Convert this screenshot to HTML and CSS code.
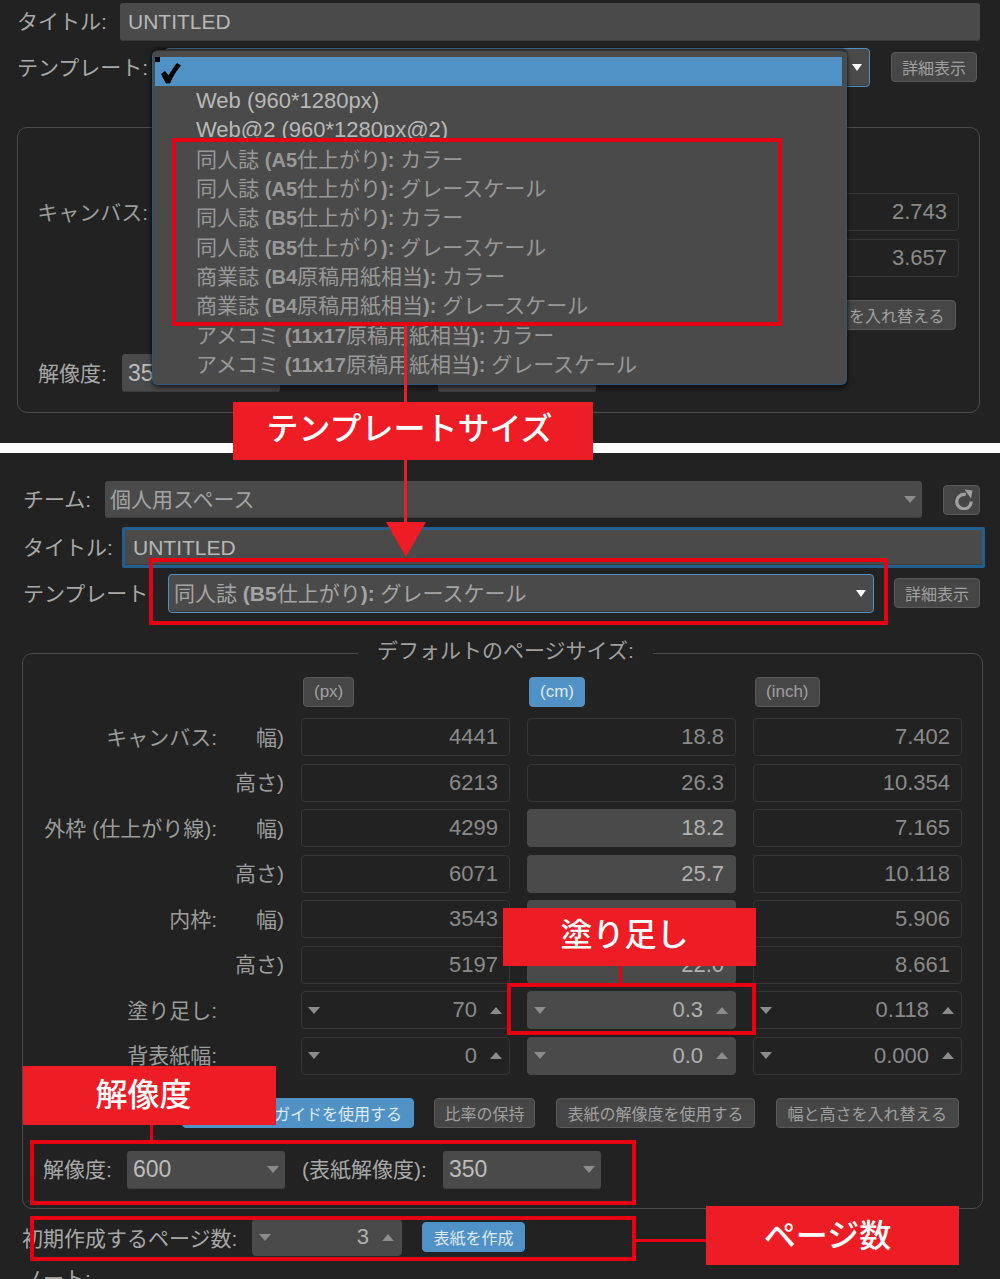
FILE: index.html
```html
<!DOCTYPE html>
<html lang="ja">
<head>
  <meta charset="UTF-8" />
  <title>テンプレートサイズ</title>
  <link rel="stylesheet" href="styles.css">
</head>
<body>
<div class="page">

  <!-- Top capture: template menu open -->
  <section class="panel panel-top">
    <div class="form-row title-row">
      <span class="row-label top-label">タイトル:</span>
      <div class="text-field">UNTITLED</div>
    </div>
    <div class="form-row template-row">
      <span class="row-label top-label">テンプレート:</span>
      <div class="select select-focus"><span></span><i class="arrow-down arrow-white"></i></div>
      <button class="btn">詳細表示</button>
    </div>

    <fieldset class="size-box size-box-top">
      <legend>&nbsp;</legend>
      <div class="size-grid size-grid-top">
        <span class="unit-spacer"></span><span></span>
        <span></span><span></span><span></span>

        <span class="group-label">キャンバス:</span><span></span>
        <div class="field"></div><div class="field"></div><div class="field">2.743</div>
        <span></span><span></span>
        <div class="field"></div><div class="field"></div><div class="field">3.657</div>
      </div>
      <div class="action-row action-row-top">
        <button class="btn">幅と高さを入れ替える</button>
      </div>
      <div class="res-row res-row-top">
        <span class="res-label">解像度:</span>
        <div class="select res-select"><span class="select-value">350</span><i class="arrow-down"></i></div>
        <span class="res-label-2"></span>
        <div class="select res-select"><i class="arrow-down"></i></div>
      </div>
    </fieldset>

    <div class="menu">
      <div class="menu-item menu-selected">
        <i class="menu-corner"></i>
        <svg class="menu-check" viewBox="0 0 20 21" width="20" height="21"><path d="M0 11 L4 8 L7.5 12.5 C10 8 13 3.5 16 0 L20 2.5 C15.5 7.5 11.5 14 9 20.5 L5 20.5 Z" fill="#000"/></svg>
      </div>
      <div class="menu-item menu-bright">Web (960*1280px)</div>
      <div class="menu-item menu-bright">Web@2 (960*1280px@2)</div>
      <div class="menu-item">同人誌 <b>(A5</b>仕上がり<b>):</b> カラー</div>
      <div class="menu-item">同人誌 <b>(A5</b>仕上がり<b>):</b> グレースケール</div>
      <div class="menu-item">同人誌 <b>(B5</b>仕上がり<b>):</b> カラー</div>
      <div class="menu-item">同人誌 <b>(B5</b>仕上がり<b>):</b> グレースケール</div>
      <div class="menu-item">商業誌 <b>(B4</b>原稿用紙相当<b>):</b> カラー</div>
      <div class="menu-item">商業誌 <b>(B4</b>原稿用紙相当<b>):</b> グレースケール</div>
      <div class="menu-item">アメコミ <b>(11x17</b>原稿用紙相当<b>):</b> カラー</div>
      <div class="menu-item">アメコミ <b>(11x17</b>原稿用紙相当<b>):</b> グレースケール</div>
    </div>
  </section>

  <div class="divider"></div>

  <!-- Bottom capture: B5 greyscale selected -->
  <section class="panel panel-bottom">
    <div class="form-row team-row">
      <span class="row-label team-label">チーム:</span>
      <div class="select"><span class="select-text">個人用スペース</span><i class="arrow-down"></i></div>
      <button class="btn icon-btn" aria-label="更新">
        <svg class="refresh-icon" viewBox="0 0 18 21" width="18" height="21"><path d="M10.8 5.6 A7.2 7.2 0 1 0 16.2 12.5" fill="none" stroke="#a0a0a0" stroke-width="3.2"/><path d="M9.5 0.5 L17.5 1.5 L16 9.5 Z" fill="#a0a0a0"/></svg>
      </button>
    </div>
    <div class="form-row title-row-2">
      <span class="row-label title-label">タイトル:</span>
      <div class="text-field text-field-focus">UNTITLED</div>
    </div>
    <div class="form-row template-row-2">
      <span class="row-label template-label">テンプレート</span>
      <div class="select select-focus"><span class="select-text">同人誌 <b>(B5</b>仕上がり<b>):</b> グレースケール</span><i class="arrow-down arrow-white"></i></div>
      <button class="btn">詳細表示</button>
    </div>

    <fieldset class="size-box">
      <legend>デフォルトのページサイズ:</legend>
      <div class="size-grid">
        <span></span><span></span>
        <button class="btn unit">(px)</button>
        <button class="btn unit btn-blue">(cm)</button>
        <button class="btn unit">(inch)</button>

        <span class="group-label">キャンバス:</span><span class="sub-label">幅)</span>
        <div class="field">4441</div><div class="field">18.8</div><div class="field">7.402</div>
        <span></span><span class="sub-label">高さ)</span>
        <div class="field">6213</div><div class="field">26.3</div><div class="field">10.354</div>

        <span class="group-label">外枠 (仕上がり線):</span><span class="sub-label">幅)</span>
        <div class="field">4299</div><div class="field field-on">18.2</div><div class="field">7.165</div>
        <span></span><span class="sub-label">高さ)</span>
        <div class="field">6071</div><div class="field field-on">25.7</div><div class="field">10.118</div>

        <span class="group-label">内枠:</span><span class="sub-label">幅)</span>
        <div class="field">3543</div><div class="field field-on"></div><div class="field">5.906</div>
        <span></span><span class="sub-label">高さ)</span>
        <div class="field">5197</div><div class="field field-on">22.0</div><div class="field">8.661</div>

        <span class="group-label">塗り足し:</span><span></span>
        <div class="field spin"><i class="arrow-down"></i><span>70</span><i class="arrow-up"></i></div>
        <div class="field field-on spin"><i class="arrow-down"></i><span>0.3</span><i class="arrow-up"></i></div>
        <div class="field spin"><i class="arrow-down"></i><span>0.118</span><i class="arrow-up"></i></div>

        <span class="group-label">背表紙幅:</span><span></span>
        <div class="field spin"><i class="arrow-down"></i><span>0</span><i class="arrow-up"></i></div>
        <div class="field field-on spin"><i class="arrow-down"></i><span>0.0</span><i class="arrow-up"></i></div>
        <div class="field spin"><i class="arrow-down"></i><span>0.000</span><i class="arrow-up"></i></div>
      </div>

      <div class="action-row">
        <button class="btn btn-blue guide-btn">ガイドを使用する</button>
        <button class="btn ratio-btn">比率の保持</button>
        <button class="btn">表紙の解像度を使用する</button>
        <button class="btn">幅と高さを入れ替える</button>
      </div>

      <div class="res-row">
        <span class="res-label">解像度:</span>
        <div class="select res-select"><span class="select-value">600</span><i class="arrow-down"></i></div>
        <span class="res-label-2">(表紙解像度):</span>
        <div class="select res-select"><span class="select-value">350</span><i class="arrow-down"></i></div>
      </div>
    </fieldset>

    <div class="pages-row">
      <span class="pages-label">初期作成するページ数:</span>
      <div class="field field-on spin pages-spin"><i class="arrow-down"></i><span>3</span><i class="arrow-up"></i></div>
      <button class="btn btn-blue">表紙を作成</button>
    </div>
    <div class="note-label">ノート:</div>
  </section>

  <!-- Red annotations laid over both captures -->
  <div class="mark mark-menu"></div>
  <div class="mark mark-template"></div>
  <div class="mark mark-bleed"></div>
  <div class="mark mark-res"></div>
  <div class="mark mark-pages"></div>

  <div class="line line-template"></div>
  <div class="arrow-head"></div>
  <div class="line line-bleed"></div>
  <div class="line line-res"></div>
  <div class="line line-pages"></div>

  <div class="tag tag-template">テンプレートサイズ</div>
  <div class="tag tag-bleed">塗り足し</div>
  <div class="tag tag-res">解像度</div>
  <div class="tag tag-pages">ページ数</div>
</div>
</body>
</html>
```

FILE: styles.css
```css
html, body {
  margin: 0;
  height: 1279px;
  overflow: hidden;
}

body {
  background-color: #222;
  color: #a8a8a8;
  font-family: "Liberation Sans", "Noto Sans CJK JP", sans-serif;
  font-size: 21px;
}

.page {
  position: relative;
  width: 1000px;
  height: 1279px;
  overflow: hidden;
}

.panel {
  box-sizing: border-box;
}

.panel-top {
  height: 443px;
  padding: 3px 20px 0 17px;
}

.divider {
  height: 10px;
  background: #fff;
}

.panel-bottom {
  height: 826px;
  padding: 28px 17px 0 22px;
}

/* Form rows */
.form-row {
  display: flex;
  align-items: center;
}

.row-label {
  flex: none;
  padding-bottom: 4px;
  white-space: nowrap;
}

.title-row {
  height: 38px;
}

.top-label {
  width: 103px;
}

.template-row {
  height: 39px;
  margin-top: 7px;
}

.template-row .top-label {
  width: 148px;
}

.template-row .btn {
  height: 30px;
  margin-left: 21px;
  margin-right: 3px;
  margin-bottom: 2px;
  padding: 0 10px;
}

.team-row {
  height: 37px;
  padding-left: 1px;
  margin-right: 3px;
}

.team-label {
  width: 82px;
}

.icon-btn {
  width: 37px;
  height: 36px;
  padding: 0;
  margin-left: 21px;
}

.refresh-icon {
  display: block;
  margin: 0 auto;
}

.title-row-2 {
  height: 41px;
  margin-top: 9px;
  padding-left: 1px;
  margin-right: -2px;
}

.title-label {
  width: 99px;
}

.template-row-2 {
  height: 39px;
  margin-top: 6px;
  padding-left: 1px;
  margin-right: 3px;
}

.template-label {
  width: 145px;
}

.template-row-2 .btn {
  margin-left: 20px;
  margin-bottom: 2px;
  padding: 0 10px;
}

/* Controls */
.text-field {
  flex: 1;
  align-self: stretch;
  display: flex;
  align-items: center;
  padding-left: 8px;
  background: #4a4a4a;
  border-radius: 3px;
  font-size: 21px;
  color: #b8b8b8;
  box-shadow: inset 0 -1px 0 #3c3c3c;
}

.text-field-focus {
  padding-left: 8px;
  border: 3px solid #235f8e;
  border-radius: 2px;
}

.select {
  flex: 1;
  align-self: stretch;
  display: flex;
  align-items: center;
  justify-content: space-between;
  box-sizing: border-box;
  padding: 0 6px 0 5px;
  background: #4a4a4a;
  border-radius: 3px;
  box-shadow: inset 0 -1px 0 #3c3c3c;
}

.select-focus {
  border: 1px solid #5090c4;
  border-radius: 4px;
  padding-right: 7px;
}

.select-text {
  padding-bottom: 4px;
  color: #a4a4a4;
}

.select-value {
  padding-left: 1px;
  font-size: 23px;
  color: #bcbcbc;
}

.btn {
  flex: none;
  height: 30px;
  padding: 0 10.5px;
  background: #464646;
  border: 1px solid #5a5a5a;
  border-radius: 4px;
  color: #a0a0a0;
  font-family: inherit;
  font-size: 16px;
  white-space: nowrap;
}

.btn-blue {
  background: #5192c6;
  border-color: #5192c6;
  color: #dfe9f2;
}

.guide-btn {
  width: 232px;
  text-align: right;
  padding-right: 11px;
}

.arrow-down,
.arrow-up {
  flex: none;
  width: 0;
  height: 0;
  border-left: 6px solid transparent;
  border-right: 6px solid transparent;
}

.arrow-down {
  border-top: 7px solid #8c8c8c;
}

.arrow-up {
  border-bottom: 7px solid #8c8c8c;
}

.arrow-white {
  border-top-color: #fff;
  border-left-width: 5.5px;
  border-right-width: 5.5px;
}

/* Page size box */
.size-box {
  min-width: 0;
  margin: 25px 0 0;
  padding: 9px 0 19px;
  border: 1px solid #4c4c4c;
  border-radius: 10px;
}

.size-box legend {
  height: 30px;
  margin-left: 335px;
  padding: 0 19px;
  font-size: 21px;
  line-height: 25px;
  color: #a0a0a0;
}

.size-box-top {
  margin-top: 25px;
  padding: 11px 0 20px;
}

.size-grid {
  display: grid;
  grid-template-columns: 194px 50px 209px 209px 209px;
  column-gap: 17px;
  row-gap: 7.5px;
  align-items: center;
}

.size-grid-top {
  grid-template-columns: 130px 50px 1fr 1fr 1fr;
  row-gap: 8px;
  padding-right: 20px;
}

.unit-spacer {
  height: 32px;
}

.unit {
  justify-self: start;
  margin: 0 0 3.5px 2px;
  padding: 0 10px;
  font-size: 17px;
}

.group-label,
.sub-label {
  padding-bottom: 3px;
  text-align: right;
  white-space: nowrap;
  color: #9c9c9c;
}

.field {
  box-sizing: border-box;
  height: 38px;
  display: flex;
  align-items: center;
  justify-content: flex-end;
  padding: 0 11px;
  border: 1px solid #363636;
  border-radius: 4px;
  font-size: 22px;
  color: #8a8a8a;
}

.field-on {
  background: #4a4a4a;
  border-color: #4a4a4a;
  color: #b0b0b0;
}

.spin {
  padding: 0 7px 0 6px;
}

.spin span {
  margin-left: auto;
  margin-right: 13px;
}

.action-row {
  display: flex;
  gap: 20px;
  margin-top: 23px;
  padding-left: 159px;
}

.action-row .btn:nth-child(n+3) {
  margin-left: 1px;
}

.ratio-btn {
  padding: 0 9.5px;
}

.action-row-top {
  justify-content: flex-end;
  margin-top: 23px;
  padding: 0 23px 0 0;
}

.res-row {
  display: flex;
  align-items: center;
  height: 38px;
  margin-top: 23px;
  padding-left: 20px;
}

.res-row-top {
  margin-top: 24px;
}

.res-label {
  width: 84px;
  padding-bottom: 3px;
}

.res-label-2 {
  width: 141px;
  margin-left: 17px;
  padding-bottom: 3px;
  white-space: nowrap;
}

.res-select {
  flex: none;
  width: 158px;
}

.pages-row {
  display: flex;
  align-items: center;
  height: 37px;
  margin-top: 10px;
}

.pages-label {
  width: 230px;
  white-space: nowrap;
}

.pages-spin {
  width: 150px;
  height: 37px;
  margin-right: 20px;
}

.note-label {
  margin-top: 6px;
}

/* Template dropdown, over the top capture */
.menu {
  position: absolute;
  left: 152px;
  top: 50px;
  box-sizing: border-box;
  width: 695px;
  height: 335px;
  padding: 6px 4px 0 2px;
  background: #4a4a4a;
  border: 1px solid #2c5a80;
  border-top-color: #333;
  border-radius: 6px;
  box-shadow: 0 3px 5px rgba(0, 0, 0, 0.6), 0 -2px 3px rgba(0, 0, 0, 0.5);
  overflow: hidden;
}

.menu-item {
  position: relative;
  height: 29.33px;
  padding-left: 41px;
  font-size: 21px;
  line-height: 29px;
  white-space: nowrap;
  color: #989898;
}

.menu-item b {
  font-size: 20px;
}

.menu-bright {
  font-size: 22px;
  color: #b8b8b8;
}

.menu-selected {
  height: 29px;
  background: #5192c6;
}

.menu-corner {
  position: absolute;
  left: 0;
  top: 0;
  width: 5px;
  height: 5px;
  background: #000;
}

.menu-check {
  position: absolute;
  left: 6px;
  top: 6px;
}

/* Red annotations */
.mark {
  position: absolute;
  box-sizing: border-box;
  border: 4px solid #e60012;
}

.mark-menu { left: 172px; top: 138px; width: 610px; height: 188px; }
.mark-template { left: 149px; top: 558px; width: 739px; height: 67px; }
.mark-bleed { left: 507px; top: 983px; width: 249px; height: 52px; }
.mark-res { left: 30px; top: 1140px; width: 606px; height: 65px; }
.mark-pages { left: 30px; top: 1216px; width: 606px; height: 45px; }

.line {
  position: absolute;
  background: #e60012;
}

.line-template { left: 404px; top: 326px; width: 3px; height: 198px; background: #ee1c25; }
.line-bleed { left: 619px; top: 966px; width: 3px; height: 18px; }
.line-res { left: 150px; top: 1125px; width: 3px; height: 16px; }
.line-pages { left: 635px; top: 1239px; width: 72px; height: 3px; }

.arrow-head {
  position: absolute;
  left: 386px;
  top: 522px;
  width: 0;
  height: 0;
  border-left: 20px solid transparent;
  border-right: 20px solid transparent;
  border-top: 35px solid #ee1c25;
}

.tag {
  position: absolute;
  box-sizing: border-box;
  display: flex;
  align-items: center;
  justify-content: center;
  background: #ee1c25;
  color: #fff;
  font-size: 32px;
  font-weight: 500;
  white-space: nowrap;
}

.tag-template { left: 233px; top: 402px; width: 360px; height: 58px; padding: 0 7px 10px 0; }
.tag-bleed { left: 503px; top: 908px; width: 253px; height: 58px; padding: 0 10px 10px 0; }
.tag-res { left: 23px; top: 1066px; width: 253px; height: 59px; padding: 0 12px 8px 0; }
.tag-pages { left: 706px; top: 1206px; width: 253px; height: 59px; padding: 0 10px 6px 0; }
```
